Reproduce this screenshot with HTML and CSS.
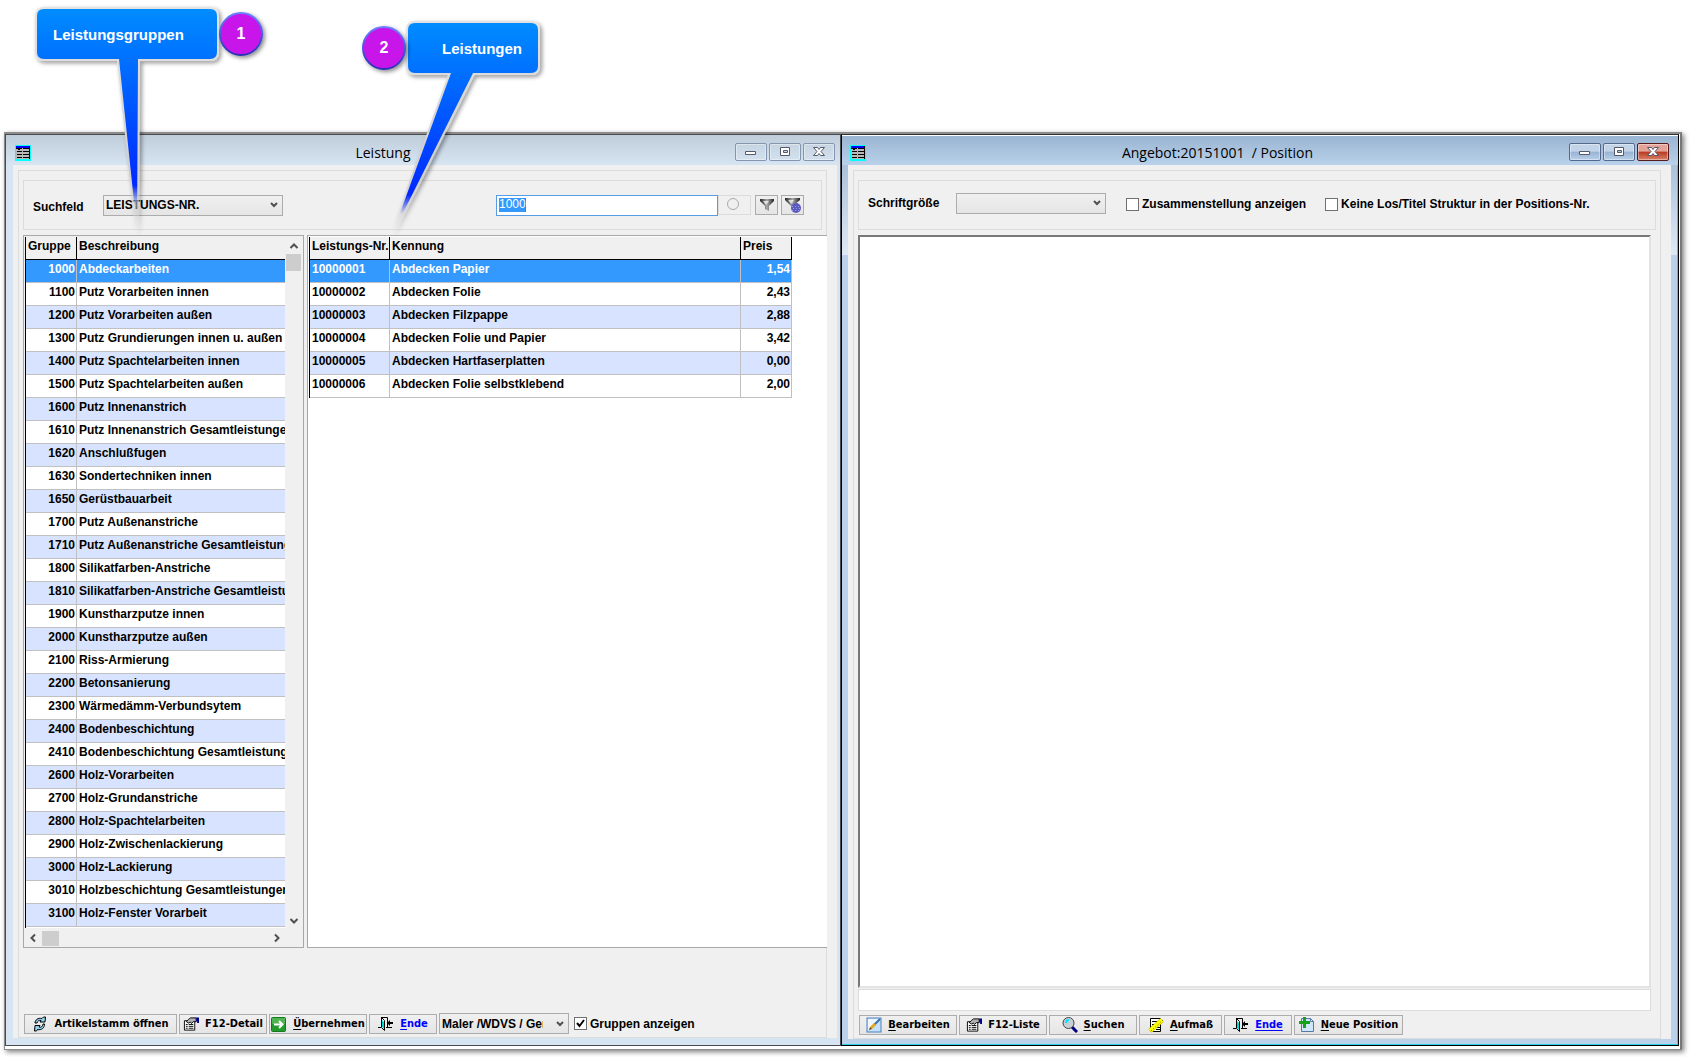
FILE: index.html
```
<!DOCTYPE html>
<html lang="de">
<head>
<meta charset="utf-8">
<title>Leistung – Angebot</title>
<link rel="stylesheet" href="styles.css">
</head>
<body>
<svg class="sprite" aria-hidden="true">
  <symbol id="i-app" viewBox="0 0 16 16"><path fill="#00ffff" d="M0 0h16v16H0z"/><path fill="#b8b8b8" d="M1 3h13v11H1z"/><path fill="#0000ff" d="M1 1h13v2H1z"/><path fill="#000" d="M1 3h6v1H5v1H3V4H1zM8 3h6v1H8zM14 1h1v13h-1zM2 6h5v1H2zM8 6h6v1H8zM2 9h5v1H2zM8 9h6v1H8zM2 12h5v1H2zM8 12h6v1H8z"/></symbol>
  <symbol id="i-min" viewBox="0 0 16 12"><path fill="#fff" stroke="#555a6b" d="M2.500 5.500h10v3h-10z"/></symbol>
  <symbol id="i-max" viewBox="0 0 16 12"><path fill="#fff" stroke="#555a6b" fill-rule="evenodd" d="M3.500 1.500h9v8h-9zM6.500 4.500h4v2h-4z"/></symbol>
  <symbol id="i-close" viewBox="0 0 16 12"><path fill="#fff" stroke="#555a6b" d="M2.500 1.500h4L8 3.500l1.500-2h4L10 5.500l3.500 4h-4L8 7.500l-1.500 2h-4L6 5.500z"/></symbol>
  <symbol id="i-circle" viewBox="0 0 16 16"><circle cx="8" cy="7" r="5.500" fill="none" stroke="#aaa"/></symbol>
  <symbol id="i-filter" viewBox="0 0 16 16"><path fill="url(#g-fun)" d="M1 2h14v2L10 9v5l-4-2V9L1 4z"/><path fill="#fff" opacity=".7" d="M4 4h6L7 8z"/></symbol>
  <symbol id="i-filter2" viewBox="0 0 16 16"><path fill="url(#g-fun)" d="M0 1h15v2L9 8v4L5 8 0 3z"/><path fill="#fff" opacity=".7" d="M3 3h6L6 7z"/><circle cx="11" cy="11" r="5" fill="#5a5abe"/><path stroke="#a0a0f0" stroke-width="1" stroke-dasharray="1 2" d="M7 9.500h7M8 11.500h7M7 13.500h7"/></symbol>
  <symbol id="i-refresh" viewBox="0 0 16 16"><path fill="#8fd3f0" stroke="#000" stroke-width="1" stroke-linejoin="round" d="M3 7c0-3 3-5.500 7-4.500L11.500 1h2l-.5 5H8l1-1.500C7 4 5.500 5 5 7zM12.500 8c0 4-3 6.500-7 5.500L4.500 15h-2l.5-5.500h5L7 11c2 1 3.500-.5 4-3z"/></symbol>
  <symbol id="i-props" viewBox="0 0 17 16"><path fill="#fff" stroke="#000" d="M1.500 4.500h11v10h-11z"/><path stroke="#000" d="M3 8.500h2M6 8.500h5M3 10.500h2M6 10.500h5M3 12.500h2M6 12.500h5"/><path fill="#b0b0b0" stroke="#000" d="M3.500 5.500L6 3l2-1.500h6v4h-3L9 7.500 8 6 6 7z"/><path fill="#000090" d="M14 1h3v6h-2V5h-1z"/></symbol>
  <symbol id="i-go" viewBox="0 0 16 16"><rect x=".5" y="1.500" width="14" height="14" rx="1" fill="#239b2c" stroke="#147a1c"/><path fill="#6cc56c" opacity=".6" d="M1 2h13v6H1z"/><path fill="none" stroke="#fff" stroke-width="2" d="M3 8.500h8M8 5l3.500 3.500L8 12"/></symbol>
  <symbol id="i-exit" viewBox="0 0 16 16"><path fill="none" stroke="#000" d="M0 11.500h3M3 1.500h6.500V11M8 11.500h6"/><path fill="#fff" stroke="#000" d="M3.500 1.500l3 3v10l-3-3z"/><path fill="#00d8d8" d="M4 4l2 2v7l-2-2z"/><path fill="#000" d="M9 7l3-3v2h3v2h-3v2z"/></symbol>
  <symbol id="i-edit" viewBox="0 0 16 16"><rect x="1" y="1" width="14" height="14" fill="#c4e0fa" stroke="#4b82bd"/><path fill="#eef7ff" d="M2 2h12L2 13z"/><path stroke="#356fb0" stroke-width="2" d="M14 2L8 8"/><path stroke="#e5a820" stroke-width="3" d="M9 7l-4 4"/><path fill="#664400" d="M3 13l1-3 2 2z"/></symbol>
  <symbol id="i-search" viewBox="0 0 16 16"><path stroke="#000080" stroke-width="3" d="M10 10l5 5"/><circle cx="6.500" cy="6" r="5.500" fill="#c8d0d4" stroke="#444"/><path fill="none" stroke="#00e0ff" stroke-width="2" d="M4 6a3 3 0 0 1 3-3"/></symbol>
  <symbol id="i-measure" viewBox="0 0 16 16"><path fill="#fff" stroke="#000" d="M2.500 1.500h10v13h-10z"/><path stroke="#000" d="M4 4.500h6M4 7.500h5M9 10.500h3M8 12.500h4"/><path stroke="#aaaa00" stroke-width="5" d="M2 14L14 3"/><path stroke="#ffff00" stroke-width="4" d="M2 14L14 3"/><path stroke="#665500" stroke-width="1" stroke-dasharray="1 2" d="M3 14L15 3"/></symbol>
  <symbol id="i-new" viewBox="0 0 16 16"><path fill="#cfe6fb" stroke="#5478a8" d="M2.500 1.500h9l3 3v10h-12z"/><path fill="#fff" stroke="#5478a8" d="M11.500 1.500v3h3z"/><path fill="#18a018" d="M4 0h3v4h4v3H7v4H4V7H0V4h4z"/></symbol>
  <symbol id="i-up" viewBox="0 0 10 10"><path fill="none" stroke="#505050" stroke-width="2" d="M1.500 7L5 3.500 8.500 7"/></symbol>
  <symbol id="i-down" viewBox="0 0 10 10"><path fill="none" stroke="#505050" stroke-width="2" d="M1.500 3L5 6.500 8.500 3"/></symbol>
  <symbol id="i-left" viewBox="0 0 10 10"><path fill="none" stroke="#505050" stroke-width="2" d="M7 1.500L3.500 5 7 8.500"/></symbol>
  <symbol id="i-right" viewBox="0 0 10 10"><path fill="none" stroke="#505050" stroke-width="2" d="M3 1.500L6.500 5 3 8.500"/></symbol>
  <linearGradient id="g-fun"><stop offset="0" stop-color="#222"/><stop offset=".5" stop-color="#aaa"/><stop offset="1" stop-color="#222"/></linearGradient>
</svg>

<main class="desktop">
  <section class="window inactive">
    <header class="titlebar">
      <svg class="icon"><use href="#i-app"/></svg>
      <h1>Leistung</h1>
      <div class="winbtns">
        <button aria-label="Minimieren"><svg><use href="#i-min"/></svg></button>
        <button aria-label="Maximieren"><svg><use href="#i-max"/></svg></button>
        <button aria-label="Schließen"><svg><use href="#i-close"/></svg></button>
      </div>
    </header>
    <div class="body">
      <div class="frame">
        <div class="panel search">
          <label for="field">Suchfeld</label>
          <select id="field"><option>LEISTUNGS-NR.</option></select>
          <input class="query" type="text" value="1000" aria-label="Suchbegriff">
          <button class="tool" disabled aria-label="Suche"><svg class="icon"><use href="#i-circle"/></svg></button>
          <button class="tool" aria-label="Filter"><svg class="icon"><use href="#i-filter"/></svg></button>
          <button class="tool" aria-label="Filter bearbeiten"><svg class="icon"><use href="#i-filter2"/></svg></button>
        </div>
        <div class="grids">
          <div class="grid groups">
            <div class="view">
              <table>
                <colgroup><col class="c-nr"><col></colgroup>
                <thead><tr><th>Gruppe</th><th>Beschreibung</th></tr></thead>
                <tbody>
                  <tr class="sel"><td>1000</td><td>Abdeckarbeiten</td></tr>
                  <tr><td>1100</td><td>Putz Vorarbeiten innen</td></tr>
                  <tr><td>1200</td><td>Putz Vorarbeiten außen</td></tr>
                  <tr><td>1300</td><td>Putz Grundierungen innen u. außen</td></tr>
                  <tr><td>1400</td><td>Putz Spachtelarbeiten innen</td></tr>
                  <tr><td>1500</td><td>Putz Spachtelarbeiten außen</td></tr>
                  <tr><td>1600</td><td>Putz Innenanstrich</td></tr>
                  <tr><td>1610</td><td>Putz Innenanstrich Gesamtleistungen</td></tr>
                  <tr><td>1620</td><td>Anschlußfugen</td></tr>
                  <tr><td>1630</td><td>Sondertechniken innen</td></tr>
                  <tr><td>1650</td><td>Gerüstbauarbeit</td></tr>
                  <tr><td>1700</td><td>Putz Außenanstriche</td></tr>
                  <tr><td>1710</td><td>Putz Außenanstriche Gesamtleistungen</td></tr>
                  <tr><td>1800</td><td>Silikatfarben-Anstriche</td></tr>
                  <tr><td>1810</td><td>Silikatfarben-Anstriche Gesamtleistungen</td></tr>
                  <tr><td>1900</td><td>Kunstharzputze innen</td></tr>
                  <tr><td>2000</td><td>Kunstharzputze außen</td></tr>
                  <tr><td>2100</td><td>Riss-Armierung</td></tr>
                  <tr><td>2200</td><td>Betonsanierung</td></tr>
                  <tr><td>2300</td><td>Wärmedämm-Verbundsytem</td></tr>
                  <tr><td>2400</td><td>Bodenbeschichtung</td></tr>
                  <tr><td>2410</td><td>Bodenbeschichtung Gesamtleistungen</td></tr>
                  <tr><td>2600</td><td>Holz-Vorarbeiten</td></tr>
                  <tr><td>2700</td><td>Holz-Grundanstriche</td></tr>
                  <tr><td>2800</td><td>Holz-Spachtelarbeiten</td></tr>
                  <tr><td>2900</td><td>Holz-Zwischenlackierung</td></tr>
                  <tr><td>3000</td><td>Holz-Lackierung</td></tr>
                  <tr><td>3010</td><td>Holzbeschichtung Gesamtleistungen</td></tr>
                  <tr><td>3100</td><td>Holz-Fenster Vorarbeit</td></tr>
                </tbody>
              </table>
            </div>
            <div class="vscroll"><svg><use href="#i-up"/></svg><i class="thumb"></i><svg class="end"><use href="#i-down"/></svg></div>
            <div class="hscroll"><svg><use href="#i-left"/></svg><i class="thumb"></i><svg class="end"><use href="#i-right"/></svg></div>
          </div>
          <div class="grid items">
            <table>
              <colgroup><col class="c-item"><col><col class="c-price"></colgroup>
              <thead><tr><th>Leistungs-Nr.</th><th>Kennung</th><th>Preis</th></tr></thead>
              <tbody>
                <tr class="sel"><td>10000001</td><td>Abdecken Papier</td><td>1,54</td></tr>
                <tr><td>10000002</td><td>Abdecken Folie</td><td>2,43</td></tr>
                <tr><td>10000003</td><td>Abdecken Filzpappe</td><td>2,88</td></tr>
                <tr><td>10000004</td><td>Abdecken Folie und Papier</td><td>3,42</td></tr>
                <tr><td>10000005</td><td>Abdecken Hartfaserplatten</td><td>0,00</td></tr>
                <tr><td>10000006</td><td>Abdecken Folie selbstklebend</td><td>2,00</td></tr>
              </tbody>
            </table>
          </div>
        </div>
        <footer class="actions">
          <button class="w-xl"><svg class="icon"><use href="#i-refresh"/></svg><span>Artikelstamm öffnen</span></button>
          <button class="w-s"><svg class="icon"><use href="#i-props"/></svg><span>F12-Detail</span></button>
          <button class="w-m"><svg class="icon"><use href="#i-go"/></svg><span><u>Ü</u>bernehmen</span></button>
          <button class="w-xs end-btn"><svg class="icon"><use href="#i-exit"/></svg><span><u>E</u>nde</span></button>
          <select class="trade" aria-label="Gewerk"><option>Maler /WDVS / Gerüst</option></select>
          <label class="check"><input type="checkbox" checked>Gruppen anzeigen</label>
        </footer>
      </div>
    </div>
  </section>

  <section class="window active">
    <header class="titlebar">
      <svg class="icon"><use href="#i-app"/></svg>
      <h1>Angebot:20151001&nbsp; / Position</h1>
      <div class="winbtns">
        <button aria-label="Minimieren"><svg><use href="#i-min"/></svg></button>
        <button aria-label="Maximieren"><svg><use href="#i-max"/></svg></button>
        <button class="close" aria-label="Schließen"><svg><use href="#i-close"/></svg></button>
      </div>
    </header>
    <div class="body">
      <div class="frame">
        <div class="panel options">
          <label for="size">Schriftgröße</label>
          <select id="size"><option></option></select>
          <label class="check"><input type="checkbox">Zusammenstellung anzeigen</label>
          <label class="check"><input type="checkbox">Keine Los/Titel Struktur in der Positions-Nr.</label>
        </div>
        <textarea class="doc" aria-label="Positionen"></textarea>
        <input class="status" type="text" aria-label="Status">
        <footer class="actions">
          <button class="w-m"><svg class="icon"><use href="#i-edit"/></svg><span><u>B</u>earbeiten</span></button>
          <button class="w-s"><svg class="icon"><use href="#i-props"/></svg><span>F12-Liste</span></button>
          <button class="w-s"><svg class="icon"><use href="#i-search"/></svg><span><u>S</u>uchen</span></button>
          <button class="w-sm"><svg class="icon"><use href="#i-measure"/></svg><span><u>A</u>ufmaß</span></button>
          <button class="w-xs end-btn"><svg class="icon"><use href="#i-exit"/></svg><span><u>Ende</u></span></button>
          <button class="w-l"><svg class="icon"><use href="#i-new"/></svg><span><u>N</u>eue Position</span></button>
        </footer>
      </div>
    </div>
  </section>
</main>

<div class="notes">
  <svg class="tails" viewBox="0 0 560 250" aria-hidden="true">
    <defs>
      <linearGradient id="g-a" gradientUnits="userSpaceOnUse" x1="0" y1="9" x2="0" y2="205"><stop offset="0" stop-color="#008cff"/><stop offset=".26" stop-color="#0070ff"/><stop offset=".9" stop-color="#0028ff"/><stop offset="1" stop-color="#0028ff" stop-opacity="0"/></linearGradient>
      <linearGradient id="g-b" gradientUnits="userSpaceOnUse" x1="0" y1="23" x2="0" y2="214"><stop offset="0" stop-color="#008cff"/><stop offset=".26" stop-color="#0070ff"/><stop offset=".9" stop-color="#0028ff"/><stop offset="1" stop-color="#0028ff" stop-opacity="0"/></linearGradient>
      <linearGradient id="g-edge" gradientUnits="userSpaceOnUse" x1="0" y1="0" x2="0" y2="235"><stop offset="0" stop-color="#e4e4e4"/><stop offset=".75" stop-color="#cfcfcf"/><stop offset="1" stop-color="#ddd" stop-opacity="0"/></linearGradient>
      <linearGradient id="g-ring" x1="0" y1="0" x2="0" y2="1"><stop offset="0" stop-color="#6a80ff"/><stop offset="1" stop-color="#2a30b8"/></linearGradient>
      <filter id="sh" x="-10%" y="-10%" width="125%" height="125%"><feDropShadow dx="2" dy="2" stdDeviation="2" flood-color="#000" flood-opacity=".45"/></filter>
    </defs>
    <g stroke="url(#g-edge)" stroke-width="4" stroke-linejoin="round" filter="url(#sh)">
      <path fill="none" d="M44 9h166q7 0 7 7v36q0 7-7 7h-72l-1 171-18-171H44q-7 0-7-7V16q0-7 7-7z"/>
      <path fill="none" d="M415 23h116q7 0 7 7v36q0 7-7 7h-58l-81 162 59-162h-36q-7 0-7-7V30q0-7 7-7z"/>
    </g>
    <path fill="url(#g-a)" d="M44 9h166q7 0 7 7v36q0 7-7 7h-72l-1 171-18-171H44q-7 0-7-7V16q0-7 7-7z"/>
    <path fill="url(#g-b)" d="M415 23h116q7 0 7 7v36q0 7-7 7h-58l-81 162 59-162h-36q-7 0-7-7V30q0-7 7-7z"/>
    <g fill="#c814ea" stroke="url(#g-ring)" stroke-width="2" filter="url(#sh)"><circle cx="241" cy="34" r="21"/><circle cx="384" cy="48" r="21"/></g>
  </svg>
  <p class="note one">Leistungsgruppen</p>
  <p class="num n1">1</p>
  <p class="num n2">2</p>
  <p class="note two">Leistungen</p>
</div>
</body>
</html>
```
FILE: styles.css
```
* { box-sizing: border-box; }

body {
  margin: 0;
  min-height: 100vh;
  padding: 132px 9px 7px 4px;
  display: flex;
  background: #fff;
  color: #000;
  font: bold 12px/16px "Liberation Sans", Arial, sans-serif;
}

button, select, input, textarea { font: inherit; color: inherit; margin: 0; border-radius: 0; }
.sprite { position: absolute; width: 0; height: 0; }
.icon { width: 16px; height: 16px; flex: none; }

.desktop {
  flex: 1;
  display: grid;
  grid-template-columns: 836fr 838fr;
  border: 1px solid #8c8c8c;
  border-top: 2px solid #8c8c8c;
  border-right: 2px solid #777;
  box-shadow: 2px 2px 5px rgba(0, 0, 0, .5);
  padding: 0 1px 3px 0;
}

/* windows */
.window { display: flex; flex-direction: column; min-width: 0; border: 1px solid #4a4a4f; }
.inactive { background: #d7e4f2; padding: 0 3px 7px 7px; }
.active {
  background: linear-gradient(#99b4d1, #dfe9f6 120px, #b9d1ea 120px);
  padding: 0 7px 6px 6px;
  border-color: #333 #000 #000;
  box-shadow: inset -1px -1px #22d3e6;
}
.titlebar { display: flex; height: 30px; align-items: center; }
.inactive .titlebar { background: linear-gradient(#bfcddb, #d7e4f2); margin: 0 -3px 0 -7px; padding: 0 5px 0 9px; }
.active .titlebar { background: linear-gradient(#99b4d1, #b9d1ea); margin: 0 -7px 0 -6px; padding: 0 9px 0 8px; box-shadow: inset 0 1px #fff; }
.titlebar .icon { margin-top: 5px; }
h1 { flex: 1; margin: 6px 0 0; text-align: center; font: 14px/20px "Open Sans", "Noto Sans", sans-serif; }
.winbtns { display: flex; gap: 2px; margin-top: 4px; }
.winbtns button {
  width: 32px; height: 18px; padding: 0;
  display: flex; align-items: center; justify-content: center;
  border: 1px solid #8495b0; border-radius: 2px;
  background: transparent;
  box-shadow: inset 0 0 0 1px rgba(255, 255, 255, .4);
}
.winbtns svg { width: 16px; height: 12px; }
.active .winbtns button { border-color: #54698c; background: linear-gradient(#c3d4e8 45%, #98b3d2 50%, #b8d0ea); }
.active .winbtns .close { border-color: #571a1c; background: linear-gradient(#e3a398 45%, #b93a23 50%, #d98268); }

.body { flex: 1; display: flex; background: #f0f0f0; padding: 5px 10px 0 5px; }
.frame { flex: 1; min-width: 0; display: flex; flex-direction: column; border: 1px solid #dcdcdc; padding: 9px 4px 3px; }
.panel { height: 50px; border: 1px solid #dcdcdc; display: flex; align-items: center; }

/* controls */
select {
  appearance: none;
  height: 21px;
  padding: 0 20px 0 2px;
  border: 1px solid #acacac;
  background: url("data:image/svg+xml,%3Csvg xmlns='http://www.w3.org/2000/svg' width='8' height='8'%3E%3Cpath d='M1 2l3 3 3-3' fill='none' stroke='%23505050' stroke-width='2'/%3E%3C/svg%3E") no-repeat right 4px center, linear-gradient(#f0f0f0, #e5e5e5);
}
.check { display: flex; align-items: center; gap: 3px; }
.check input {
  appearance: none;
  width: 13px; height: 13px;
  border: 1px solid #707070;
  background: #fff;
}
.check input:checked { background: #fff url("data:image/svg+xml,%3Csvg xmlns='http://www.w3.org/2000/svg' width='11' height='11'%3E%3Cpath d='M2 5l2.500 3L9 2' fill='none' stroke='%23000' stroke-width='2'/%3E%3C/svg%3E") center; }

.search { padding: 0 17px 0 9px; }
.search label { width: 70px; padding-top: 3px; }
.search select { width: 180px; }
.query {
  margin-left: auto;
  width: 222px; height: 21px;
  padding: 0 2px 2px;
  border: 1px solid #569de5;
  color: #fff;
  font-weight: normal;
  background: linear-gradient(#c86400, #c86400) 28px 2px / 1px 14px no-repeat, linear-gradient(#39f, #39f) 2px 2px / 26px 14px no-repeat, #fff;
}
.tool {
  width: 23px; height: 20px; padding: 0; margin-left: 3px;
  display: flex; align-items: center; justify-content: center;
  border: 1px solid #acacac;
  background: linear-gradient(#f0f0f0, #e5e5e5);
}
.tool:disabled { width: 33px; margin: 0 1px 0 0; padding-right: 4px; border-color: #dcdcdc; background: #f0f0f0; }

.options { padding: 0 16px 0 9px; }
.options > label:first-child { width: 88px; margin-bottom: 5px; }
.options select { width: 150px; margin: 0 20px 4px 0; }
.options .check { margin: 0 19px 2px 0; }

/* data grids */
.grids { margin: 5px -5px 0 0; height: 713px; display: flex; gap: 3px; }
.grid { border: 1px solid #a8a8a8; }
.groups {
  width: 281px;
  padding: 1px;
  display: grid;
  grid-template-columns: 1fr 17px;
  grid-template-rows: 1fr 18px;
}
.view { background: #fff; overflow: hidden; border-left: 1px solid #000; }
.items { flex: 1; min-width: 0; padding: 1px; background: #fff; border-right: 0; }
.items table { width: 483px; border-left: 1px solid #000; }
table { width: 100%; table-layout: fixed; border-collapse: separate; border-spacing: 0; }
.c-nr { width: 51px; }
.c-item { width: 80px; }
.c-price { width: 51px; }
th, td { height: 23px; padding: 0 1px 5px 2px; line-height: 16px; text-align: left; overflow: hidden; white-space: nowrap; border-right: 1px solid #c0c0c0; border-bottom: 1px solid #c0c0c0; }
th { background: #f0f0f0; border-color: #000; padding-bottom: 4px; }
th:first-child { padding-right: 0; }
.groups th:last-child, .groups td:last-child { border-right: 0; }
.groups td:first-child, .items td:last-child { text-align: right; }
tbody tr:nth-child(odd) { background: #d8e4ff; }
tbody tr.sel { background: #39f; color: #fff; }

.vscroll, .hscroll { display: flex; align-items: center; }
.vscroll { flex-direction: column; padding: 4px 0 2px; }
.vscroll .thumb { width: 15px; height: 17px; margin-top: 3px; }
.vscroll .end { margin-top: auto; }
.hscroll { padding: 2px 3px 0 3px; }
.hscroll .thumb { width: 17px; height: 15px; margin-left: 4px; }
.hscroll .end { margin-left: auto; }
.vscroll svg, .hscroll svg { width: 10px; height: 10px; }
.thumb { background: #cdcdcd; }

/* bottom bars */
.actions { margin-top: auto; padding-left: 1px; display: flex; gap: 2px; align-items: center; }
.actions button {
  height: 20px;
  padding: 0;
  display: flex; align-items: center; justify-content: center; gap: 6px;
  border: 1px solid #acacac;
  background: linear-gradient(#f0f0f0, #e5e5e5);
  font: bold 11px/16px "DejaVu Sans Condensed", "DejaVu Sans", sans-serif;
  white-space: nowrap;
}
.actions button u { text-underline-offset: 2px; }
.w-xl { width: 153px; }
.w-l { width: 109px; }
.w-m { width: 98px; }
.w-s { width: 88px; }
.w-sm { width: 83px; }
.w-xs { width: 68px; }
.end-btn span { color: #00f; }
.trade { width: 130px; margin-right: 3px; padding-right: 25px; }

.doc {
  display: block;
  flex: 1;
  margin: 5px 5px 0 0;
  resize: none;
  background: #fff;
  border: 2px solid;
  border-color: #777 #e3e3e3 #e3e3e3 #777;
}
.status { margin: 1px 5px 4px 0; height: 22px; border: 1px solid #dcdcdc; background: #fff; }

/* callouts over the windows */
.notes { position: absolute; left: 0; top: 0; width: 560px; height: 250px; pointer-events: none; color: #fff; }
.tails { position: absolute; inset: 0; width: 560px; height: 250px; }
.notes p { position: absolute; margin: 0; }
.note { font-size: 15px; line-height: 20px; }
.one { left: 53px; top: 25px; }
.two { left: 442px; top: 39px; }
.num { width: 40px; text-align: center; font-size: 16px; line-height: 20px; }
.n1 { left: 221px; top: 24px; }
.n2 { left: 364px; top: 38px; }
```
